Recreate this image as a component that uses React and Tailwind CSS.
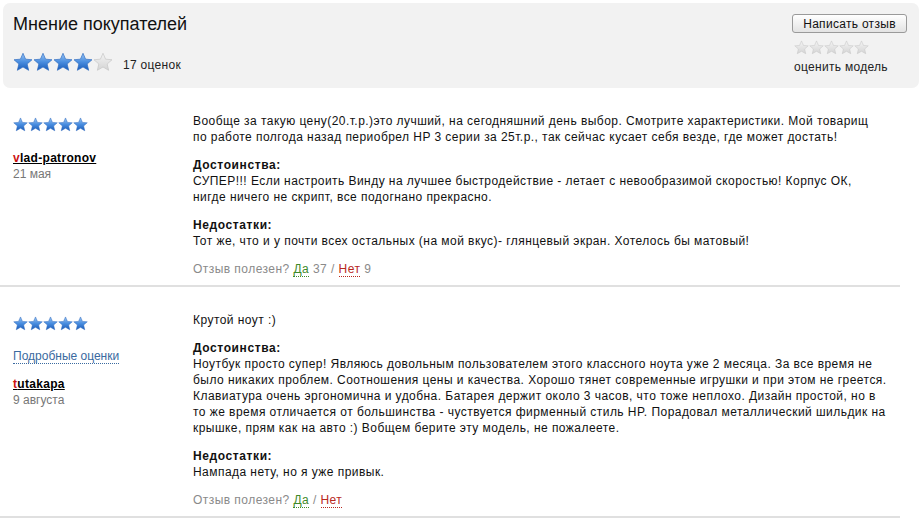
import { useId } from 'react'

const FONT = { fontFamily: '"Liberation Sans", Arial, sans-serif' }

function Star({ size = 15, filled = true }) {
  const id = useId()
  return (
    <svg width={size} height={size} viewBox="0 0 24 24" className="block">
      <defs>
        <linearGradient id={id} x1="0" y1="0" x2="0" y2="1">
          {filled ? (
            <>
              <stop offset="0%" stopColor="#9cc6f3" />
              <stop offset="50%" stopColor="#4a8ee0" />
              <stop offset="100%" stopColor="#1a5bb8" />
            </>
          ) : (
            <>
              <stop offset="0%" stopColor="#f4f4f4" />
              <stop offset="100%" stopColor="#d4d4d4" />
            </>
          )}
        </linearGradient>
      </defs>
      <path
        d="M12 1.5l3.1 7.1 7.7.7-5.8 5.1 1.8 7.6L12 18 5.2 22l1.8-7.6-5.8-5.1 7.7-.7z"
        fill={`url(#${id})`}
        stroke={filled ? '#2c69bf' : '#c4c4c4'}
        strokeWidth="0.8"
      />
    </svg>
  )
}

function Stars({ count = 5, total = 5, size = 15 }) {
  return (
    <div className="flex">
      {Array.from({ length: total }).map((_, i) => (
        <Star key={i} size={size} filled={i < count} />
      ))}
    </div>
  )
}

function Lines({ lines }) {
  return lines.map((l, i) => (
    <div key={i} className="whitespace-nowrap">{l}</div>
  ))
}

function Useful({ yes, no }) {
  return (
    <div className="text-[#8a8a8a]">
      Отзыв полезен?{' '}
      <span className="text-[#3f8a2a] border-b border-dotted border-[#3f8a2a]">Да</span>
      {yes != null && <> {yes}</>}
      {' / '}
      <span className="text-[#b8281e] border-b border-dotted border-[#b8281e]">Нет</span>
      {no != null && <> {no}</>}
    </div>
  )
}

function Author({ name, date }) {
  return (
    <div>
      <div className="font-bold underline text-black tracking-[0.3px]">
        <span className="text-[#cc1111]">{name[0]}</span>
        {name.slice(1)}
      </div>
      <div className="text-[#777]">{date}</div>
    </div>
  )
}

const reviews = [
  {
    name: 'vlad-patronov',
    date: '21 мая',
    details: false,
    intro: [
      'Вообще за такую цену(20.т.р.)это лучший, на сегодняшний день выбор. Смотрите характеристики. Мой товарищ',
      'по работе полгода назад периобрел HP 3 серии за 25т.р., так сейчас кусает себя везде, где может достать!',
    ],
    pros: [
      'СУПЕР!!! Если настроить Винду на лучшее быстродействие - летает с невообразимой скоростью! Корпус ОК,',
      'нигде ничего не скрипт, все подогнано прекрасно.',
    ],
    cons: ['Тот же, что и у почти всех остальных (на мой вкус)- глянцевый экран. Хотелось бы матовый!'],
    yes: 37,
    no: 9,
  },
  {
    name: 'tutakapa',
    date: '9 августа',
    details: true,
    intro: ['Крутой ноут :)'],
    pros: [
      'Ноутбук просто супер! Являюсь довольным пользователем этого классного ноута уже 2 месяца. За все время не',
      'было никаких проблем. Соотношения цены и качества. Хорошо тянет современные игрушки и при этом не греется.',
      'Клавиатура очень эргономична и удобна. Батарея держит около 3 часов, что тоже неплохо. Дизайн простой, но в',
      'то же время отличается от большинства - чуствуется фирменный стиль HP. Порадовал металлический шильдик на',
      'крышке, прям как на авто :) Вобщем берите эту модель, не пожалеете.',
    ],
    cons: ['Нампада нету, но я уже привык.'],
    yes: null,
    no: null,
  },
]

function Review({ r }) {
  return (
    <div className="flex pl-[13px] pt-[25px] pb-[8px] border-b-2 border-[#e0e0e0] w-[900px]">
      <div className="w-[180px] shrink-0 pt-[4px]">
        <Stars size={15} />
        {r.details && (
          <div className="mt-[17px]">
            <span className="text-[#3a6aa0] border-b border-dotted border-[#3a6aa0]">Подробные оценки</span>
          </div>
        )}
        <div className={r.details ? 'mt-[12px]' : 'mt-[18px]'}>
          <Author name={r.name} date={r.date} />
        </div>
      </div>
      <div className="flex flex-col gap-[12px] text-[#111] tracking-[0.45px]">
        <div>
          <Lines lines={r.intro} />
        </div>
        <div>
          <div className="font-bold tracking-[0.6px]">Достоинства:</div>
          <Lines lines={r.pros} />
        </div>
        <div>
          <div className="font-bold tracking-[0.6px]">Недостатки:</div>
          <Lines lines={r.cons} />
        </div>
        <Useful yes={r.yes} no={r.no} />
      </div>
    </div>
  )
}

export default function App() {
  return (
    <div className="bg-white w-[922px] h-[519px] overflow-hidden text-[12px] leading-[16px]" style={FONT}>
      <div className="mx-[3px] mt-[3px] h-[85px] bg-[#f2f2f2] rounded-[7px] flex justify-between pl-[10px] pr-[12px]">
        <div className="pt-[10px]">
          <div className="text-[18px] leading-[22px] text-[#111]">Мнение покупателей</div>
          <div className="flex items-end mt-[17px]">
            <Stars count={4} size={20} />
            <span className="ml-[10px] text-[#222] leading-[14px] tracking-[0.3px]">17 оценок</span>
          </div>
        </div>
        <div className="pt-[11px] w-[115px]">
          <button className="w-[115px] h-[19px] border border-[#9a9a9a] rounded-[3px] bg-gradient-to-b from-white to-[#e3e3e3] text-[12px] leading-[16px] text-[#111] tracking-[0.3px]">
            Написать отзыв
          </button>
          <div className="ml-[2px] mt-[7px]">
            <Stars count={0} size={15} />
          </div>
          <div className="ml-[2px] mt-[4px] text-[#222] tracking-[0.3px]">оценить модель</div>
        </div>
      </div>
      {reviews.map(r => (
        <Review key={r.name} r={r} />
      ))}
    </div>
  )
}
